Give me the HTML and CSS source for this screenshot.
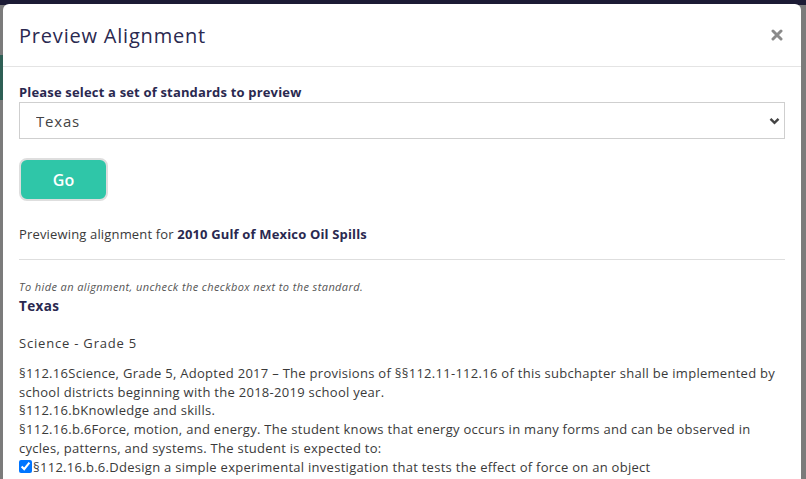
FILE: index.html
```html
<!DOCTYPE html>
<html lang="en">
<head>
<meta charset="utf-8">
<title>Preview Alignment</title>
<link rel="stylesheet" href="styles.css">
</head>
<body>
<div class="backdrop">
  <div class="modal">
    <div class="modal-header">
      <h4 class="modal-title">Preview Alignment</h4>
      <button class="close" type="button" aria-label="Close">
        <svg width="12" height="12" viewBox="0 0 12 12"><path d="M2 2L10 10M10 2L2 10" stroke="#8a8a8a" stroke-width="3" stroke-linecap="round"/></svg>
      </button>
    </div>
    <div class="modal-body">
      <label class="field-label" for="std">Please select a set of standards to preview</label>
      <div class="select-wrap">
        <select id="std" class="select"><option>Texas</option></select>
        <svg class="chevron" width="11" height="8" viewBox="0 0 11 8"><path d="M1.5 1.8L5.5 5.8L9.5 1.8" fill="none" stroke="#444" stroke-width="2.4"/></svg>
      </div>
      <button class="btn-go" type="button">Go</button>
      <p class="previewing">Previewing alignment for <strong>2010 Gulf of Mexico Oil Spills</strong></p>
      <hr class="divider">
      <p class="hint">To hide an alignment, uncheck the checkbox next to the standard.</p>
      <h5 class="state">Texas</h5>
      <p class="subject">Science - Grade 5</p>
      <div class="standards">
        <div class="std">§112.16Science, Grade 5, Adopted 2017 – The provisions of §§112.11-112.16 of this subchapter shall be implemented by school districts beginning with the 2018-2019 school year.</div>
        <div class="std">§112.16.bKnowledge and skills.</div>
        <div class="std">§112.16.b.6Force, motion, and energy. The student knows that energy occurs in many forms and can be observed in cycles, patterns, and systems. The student is expected to:</div>
        <div class="std"><input type="checkbox" class="check" checked>§112.16.b.6.Ddesign a simple experimental investigation that tests the effect of force on an object</div>
      </div>
    </div>
  </div>
</div>
</body>
</html>
```
FILE: styles.css
```css
* { box-sizing: border-box; }
html, body { margin: 0; height: 100%; overflow: hidden; }
body {
  font-family: "Open Sans", "Noto Sans", sans-serif;
  background:
    linear-gradient(#1c1b35, #1c1b35) 0 0 / 100% 5px no-repeat,
    linear-gradient(#2f5f55, #2f5f55) 0 55px / 3px 45px no-repeat,
    #7b7b7b;
}
.backdrop { padding: 4px 5px 0 3px; }
.modal {
  background: #fff;
  border-radius: 6px 6px 0 0;
  height: 480px;
}
.modal-header {
  height: 63px;
  padding: 0 16px;
  display: flex;
  align-items: center;
  justify-content: space-between;
  border-bottom: 1px solid #e4e4e4;
}
.modal-title {
  margin: 0;
  font-size: 20px;
  font-weight: 400;
  letter-spacing: 0.8px;
  color: #2a2950;
}
.close {
  background: none;
  border: 0;
  padding: 0;
  margin-right: 2px;
  display: flex;
}
.modal-body { padding: 16px 16px 0; }
.field-label {
  display: block;
  font-size: 13px;
  font-weight: 700;
  letter-spacing: 0.17px;
  color: #2a2950;
  line-height: 18px;
  margin-bottom: 1px;
}
.select-wrap { position: relative; width: 766px; }
.select {
  appearance: none;
  -webkit-appearance: none;
  width: 100%;
  height: 37px;
  border: 1px solid #cfcfcf;
  border-radius: 0;
  background: #fff;
  padding: 0 16px;
  font: inherit;
  font-size: 15px;
  letter-spacing: 0.8px;
  color: #444;
}
.chevron { position: absolute; right: 5px; top: 15px; }
.btn-go {
  display: block;
  margin-top: 19px;
  width: 89px;
  height: 43px;
  border: 2px solid #dedede;
  border-radius: 8px;
  background: #2fc6a8;
  color: #fff;
  font: inherit;
  font-size: 16px;
  font-weight: 600;
}
.previewing {
  margin: 24px 0 0;
  font-size: 13px;
  letter-spacing: 0.16px;
  line-height: 19px;
  color: #3a3a3a;
}
.previewing strong { color: #2a2950; }
.divider {
  margin: 15px 0 0;
  border: 0;
  border-top: 1px solid #dedede;
}
.hint {
  margin: 20px 0 0;
  font-size: 11px;
  font-style: italic;
  letter-spacing: 0.4px;
  color: #555;
  line-height: 14px;
}
.state {
  margin: 3px 0 0;
  font-size: 13.5px;
  font-weight: 700;
  letter-spacing: 0.4px;
  color: #2a2950;
  line-height: 19px;
}
.subject {
  margin: 18px 0 0;
  font-size: 13px;
  letter-spacing: 0.8px;
  line-height: 19px;
  color: #3a3a3a;
}
.standards {
  margin-top: 11px;
  font-size: 13px;
  letter-spacing: 0.28px;
  line-height: 18.7px;
  color: #3a3a3a;
}
.check {
  margin: 0 1px 0 0;
  width: 13px;
  height: 13px;
  vertical-align: -1px;
}
```
